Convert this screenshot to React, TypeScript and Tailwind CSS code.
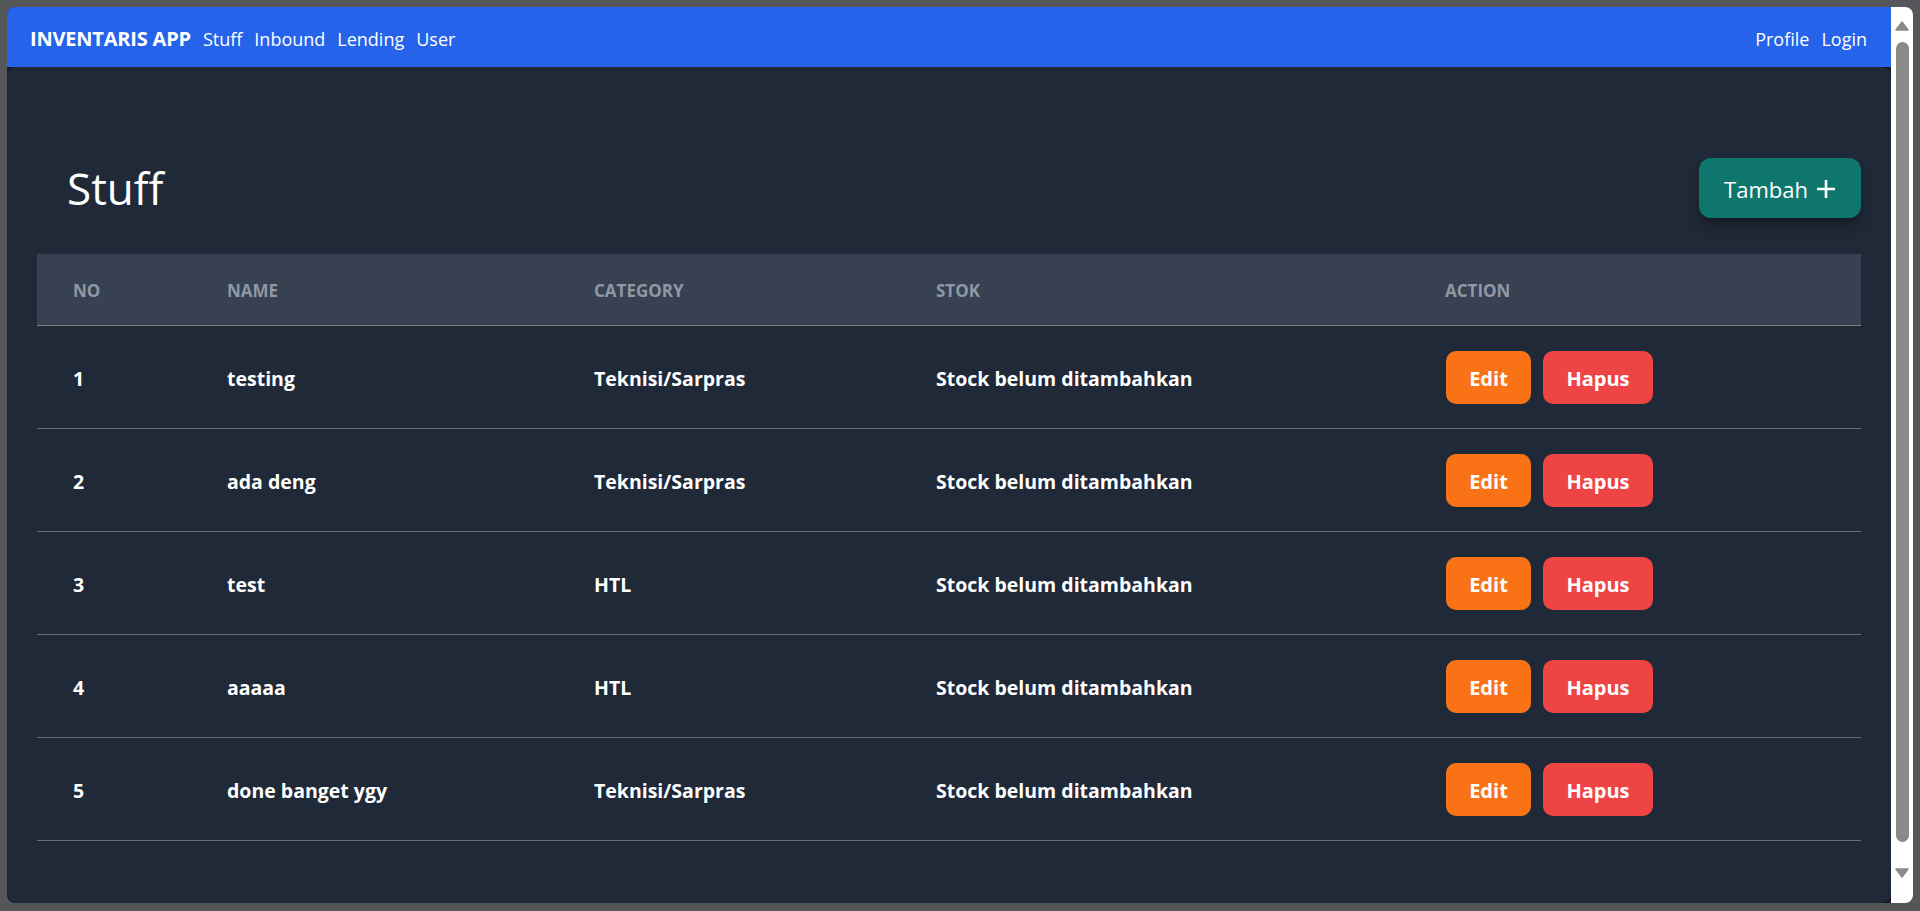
import React from "react";

const rows = [
  { no: 1, name: "testing", category: "Teknisi/Sarpras" },
  { no: 2, name: "ada deng", category: "Teknisi/Sarpras" },
  { no: 3, name: "test", category: "HTL" },
  { no: 4, name: "aaaaa", category: "HTL" },
  { no: 5, name: "done banget ygy", category: "Teknisi/Sarpras" },
];

const cols = "grid grid-cols-[154px_367px_342px_509px_1fr]";

export default function App() {
  return (
    <div
      className="w-[1920px] h-[911px] bg-[#55565a] pt-[7px] pl-[7px] pr-[7px] pb-[8px] overflow-hidden"
      style={{ fontFamily: '"Open Sans", "Noto Sans", sans-serif' }}
    >
      <div className="flex h-full rounded-[8px] overflow-hidden">
        <div className="flex-1 flex flex-col bg-[#181b21]">
          <nav className="h-[60px] bg-[#2563eb] flex items-center justify-between pl-[23px] pr-[24px] pt-[4px] text-white shrink-0">
            <div className="flex items-center gap-[12px]">
              <span className="text-[20px] font-bold tracking-[-0.2px]">INVENTARIS APP</span>
              <div className="flex items-center gap-[12px] text-[18px]">
                <span>Stuff</span>
                <span>Inbound</span>
                <span>Lending</span>
                <span>User</span>
              </div>
            </div>
            <div className="flex items-center gap-[12px] text-[18px]">
              <span>Profile</span>
              <span>Login</span>
            </div>
          </nav>
          <main className="flex-1 bg-[#1f2937] rounded-[10px] px-[30px] pt-[91px]">
            <div className="flex items-center justify-between h-[60px]">
              <h1 className="ml-[30px] text-[44px] font-medium text-white leading-none">Stuff</h1>
              <button className="h-[60px] w-[162px] rounded-[12px] bg-[#0f766e] text-white text-[22px] flex items-center justify-center gap-[8px] pt-[2px] shadow-lg shadow-black/30">
                <span>Tambah</span>
                <svg width="20" height="20" viewBox="0 0 20 20" fill="none" stroke="white" strokeWidth="2.6">
                  <path d="M10 1v18M1 10h18" />
                </svg>
              </button>
            </div>
            <div className="mt-[36px]">
              <div className={`${cols} h-[72px] items-center bg-[#374151] border-b border-[#7d7a76] text-[17px] font-bold uppercase text-[#8f98a5]`}>
                <div className="pl-[36px] pt-[2px]">No</div>
                <div className="pl-[36px] pt-[2px]">Name</div>
                <div className="pl-[36px] pt-[2px]">Category</div>
                <div className="pl-[36px] pt-[2px]">Stok</div>
                <div className="pl-[36px] pt-[2px]">Action</div>
              </div>
              {rows.map((r) => (
                <div
                  key={r.no}
                  className={`${cols} h-[103px] items-center border-b border-[#6b6e74] text-[19.5px] font-bold text-white`}
                >
                  <div className="pl-[36px] pt-[4px]">{r.no}</div>
                  <div className="pl-[36px] pt-[4px]">{r.name}</div>
                  <div className="pl-[36px] pt-[4px]">{r.category}</div>
                  <div className="pl-[36px] pt-[4px]">Stock belum ditambahkan</div>
                  <div className="pl-[37px] flex items-center gap-[12px]">
                    <button className="w-[85px] h-[53px] rounded-[10px] bg-[#f97316] text-white text-[20px] font-bold pt-[4px]">
                      Edit
                    </button>
                    <button className="w-[110px] h-[53px] rounded-[10px] bg-[#ef4444] text-white text-[20px] font-bold pt-[4px]">
                      Hapus
                    </button>
                  </div>
                </div>
              ))}
            </div>
          </main>
        </div>
        <div className="w-[22px] bg-white flex flex-col items-center shrink-0">
          <div className="h-[35px] flex items-center justify-center pt-[2px]">
            <svg width="14" height="10" viewBox="0 0 14 10">
              <path d="M7 1 L13 9 L1 9 Z" fill="#8a8a8a" stroke="#8a8a8a" strokeLinejoin="round" strokeWidth="1.5" />
            </svg>
          </div>
          <div className="w-[13px] h-[800px] rounded-full bg-[#8a8a8a]" />
          <div className="flex-1 flex items-center justify-center">
            <svg width="14" height="10" viewBox="0 0 14 10">
              <path d="M1 1 L13 1 L7 9 Z" fill="#8a8a8a" stroke="#8a8a8a" strokeLinejoin="round" strokeWidth="1.5" />
            </svg>
          </div>
        </div>
      </div>
    </div>
  );
}
